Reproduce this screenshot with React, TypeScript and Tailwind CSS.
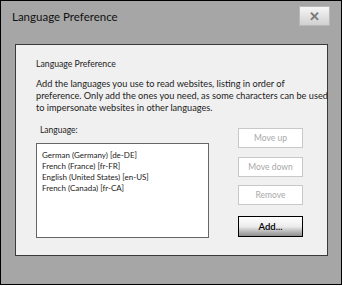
import React from 'react';

const LANGS = ['German (Germany) [de-DE]', 'French (France) [fr-FR]', 'English (United States) [en-US]', 'French (Canada) [fr-CA]'];

const font = { fontFamily: 'Lato, "Open Sans", sans-serif' };

const DisabledButton = ({ label, className = '' }: { label: string; className?: string }) => (
  <button
    disabled
    className={`w-[65px] h-[20px] shrink-0 bg-white border border-[#c8c8c8] text-[8.5px] text-[#a8a8a8] leading-none ${className}`}
  >
    {label}
  </button>
);

export default function App() {
  return (
    <div style={font} className="w-[342px] h-[285px] border border-black bg-[#a6a6a6] flex flex-col">
      {/* title bar */}
      <div className="h-[43px] flex items-start justify-between pl-[11px] pr-[11px]">
        <span className="mt-[8px] text-[11.5px] leading-[16px] text-[#111]">Language Preference</span>
        <button className="mt-[5px] w-[31px] h-[20px] bg-gradient-to-b from-[#f6f6f6] to-[#d0d0d0] border border-[#b8b8b8] flex items-center justify-center">
          <span className="text-[13px] font-black leading-none text-[#7a7a7a]">✕</span>
        </button>
      </div>

      {/* content panel */}
      <div className="ml-[14px] w-[313px] h-[212px] border border-[#3a3a3a] bg-[#f0f0f0] px-[20px] pt-[13px] flex flex-col">
        <div className="text-[8.7px] leading-[12px] text-[#222]">Language Preference</div>
        <p className="mt-[8px] text-[9.2px] leading-[12px] text-[#222] whitespace-nowrap">
          Add the languages you use to read websites, listing in order of
          <br />
          preference. Only add the ones you need, as some characters can be used
          <br />
          to impersonate websites in other languages.
        </p>

        <div className="mt-[10px] flex">
          <div className="flex flex-col">
            <span className="pl-[4px] text-[8.5px] leading-[12px] text-[#222]">Language:</span>
            <div className="mt-[7px] w-[173px] h-[95px] bg-white border border-[#666] pl-[5px] pt-[6px]">
              {LANGS.map((l) => (
                <div key={l} className="text-[8px] leading-[11px] text-[#222]">
                  {l}
                </div>
              ))}
            </div>
          </div>

          <div className="ml-[29px] mt-[4px] flex flex-col">
            <DisabledButton label="Move up" />
            <DisabledButton label="Move down" className="mt-[9px]" />
            <DisabledButton label="Remove" className="mt-[8px]" />
            <button className="mt-[11px] w-[65px] h-[21px] shrink-0 border border-black bg-gradient-to-b from-white via-[#ececec] to-[#8e8e8e] text-[9.5px] font-semibold text-black leading-none">
              Add...
            </button>
          </div>
        </div>
      </div>
    </div>
  );
}
